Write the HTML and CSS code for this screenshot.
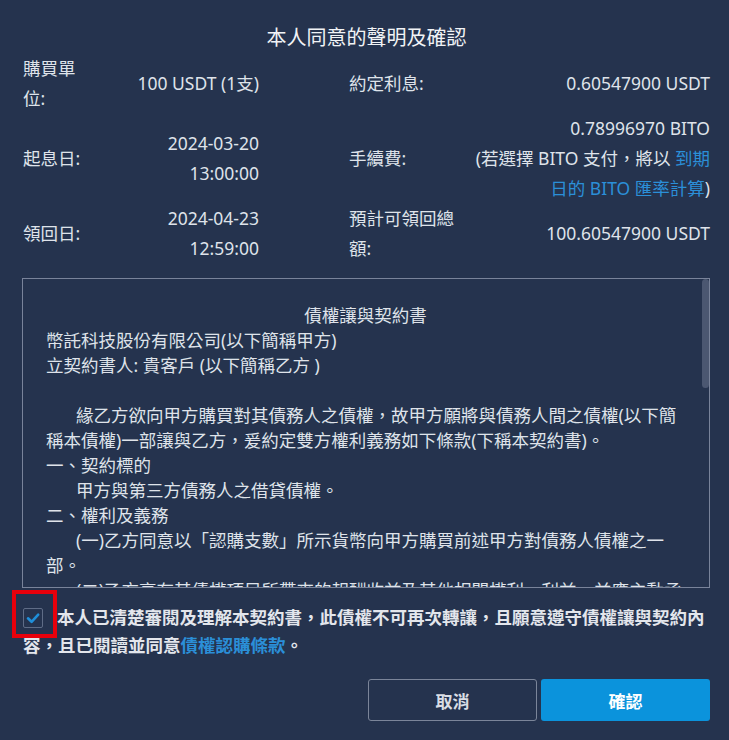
FILE: index.html
```html
<!DOCTYPE html>
<html lang="zh-Hant">
<head>
<meta charset="utf-8">
<title>本人同意的聲明及確認</title>
<link rel="stylesheet" href="styles.css">
</head>
<body>
<div class="dialog">
  <h1 class="title">本人同意的聲明及確認</h1>

  <div class="info">
    <div class="cell left">
      <div class="label l-left">購買單位:</div>
      <div class="value"><span class="v-left">100 USDT (1支)</span></div>
    </div>
    <div class="cell right">
      <div class="label l-right">約定利息:</div>
      <div class="value">0.60547900 USDT</div>
    </div>

    <div class="cell left">
      <div class="label l-left">起息日:</div>
      <div class="value"><span class="v-left">2024-03-20 13:00:00</span></div>
    </div>
    <div class="cell right">
      <div class="label l-right">手續費:</div>
      <div class="value">0.78996970 BITO<br>(若選擇 BITO 支付，將以 <span class="link">到期日的 BITO 匯率計算</span>)</div>
    </div>

    <div class="cell left">
      <div class="label l-left">領回日:</div>
      <div class="value"><span class="v-left">2024-04-23 12:59:00</span></div>
    </div>
    <div class="cell right">
      <div class="label l-right">預計可領回總額:</div>
      <div class="value">100.60547900 USDT</div>
    </div>
  </div>

  <div class="contract-frame">
    <div class="contract">
      <p class="c-title">債權讓與契約書</p>
      <p>幣託科技股份有限公司(以下簡稱甲方)</p>
      <p>立契約書人: 貴客戶 (以下簡稱乙方 )</p>
      <p class="blank">&nbsp;</p>
      <p class="ind">緣乙方欲向甲方購買對其債務人之債權，故甲方願將與債務人間之債權(以下簡稱本債權)一部讓與乙方，爰約定雙方權利義務如下條款(下稱本契約書)。</p>
      <p>一、契約標的</p>
      <p class="ind">甲方與第三方債務人之借貸債權。</p>
      <p>二、權利及義務</p>
      <p class="ind">(一)乙方同意以「認購支數」所示貨幣向甲方購買前述甲方對債務人債權之一部。</p>
      <p class="ind">(二)乙方享有其債權項目所帶來的報酬收益及其他相關權利、利益，並應主動承擔其債權項目可能產生之風險，包括但不限於債務人違約或延遲清償之風險。</p>
      <p class="ind">(三)甲方應於約定期間屆滿時，將乙方應得之本金及利息支付予乙方。</p>
      <p>三、債權讓與之通知</p>
      <p class="ind">甲方得以書面或電子方式通知債務人本債權已讓與乙方之事實。</p>
      <p>四、其他約定</p>
      <p class="ind">本契約未盡事宜，依中華民國相關法令及誠實信用原則處理。</p>
    </div>
    <div class="thumb"></div>
  </div>

  <p class="agree">
    <span class="check-wrap">
      <span class="checkbox">
        <svg viewBox="0 0 20 20" width="20" height="20" aria-hidden="true"><path d="M5 10.3 L8.6 13.8 L15.2 6.6" fill="none" stroke="#1f8fda" stroke-width="2.6" stroke-linecap="round" stroke-linejoin="round"/></svg>
      </span>
      <span class="highlight"></span>
    </span>本人已清楚審閱及理解本契約書，此債權不可再次轉讓，且願意遵守債權讓與契約內容，且已閱讀並同意<span class="link">債權認購條款</span>。
  </p>

  <div class="actions">
    <button class="btn btn-cancel" type="button">取消</button>
    <button class="btn btn-ok" type="button">確認</button>
  </div>
</div>
</body>
</html>
```

FILE: styles.css
```css
html, body {
  margin: 0;
  padding: 0;
  background: #25334e;
}

body {
  font-family: "Noto Sans", "Noto Sans CJK TC", sans-serif;
  color: #dfe3ea;
  font-size: 17.5px;
}

.dialog {
  width: 729px;
  height: 740px;
  box-sizing: border-box;
  padding: 23px 19px 0 23px;
}

.title {
  margin: 0;
  font-size: 20px;
  line-height: 30px;
  font-weight: 400;
  text-align: center;
  color: #f1f3f6;
}

.info {
  display: grid;
  grid-template-columns: 236px 1fr;
  column-gap: 90px;
  align-items: center;
  line-height: 30px;
}

.cell {
  display: flex;
  align-items: center;
}

.label {
  flex: none;
}

.l-left {
  width: 61px;
}

.l-right {
  width: 110px;
}

.value {
  flex: 1;
  text-align: right;
}

.v-left {
  display: inline-block;
  max-width: 140px;
  text-align: right;
}

.link {
  color: #2b8fd8;
}

.contract-frame {
  position: relative;
  margin: 15px 0 0 -1px;
  height: 310px;
  box-sizing: border-box;
  border: 1px solid #79839a;
}

.contract {
  height: 100%;
  box-sizing: border-box;
  padding: 24px 24px 0 23px;
  overflow: hidden;
  line-height: 25px;
}

.thumb {
  position: absolute;
  top: 0;
  right: 0;
  width: 7px;
  height: 109px;
  background: #4b5771;
  border-radius: 4px;
}

.contract p {
  margin: 0;
}

.contract .c-title {
  text-align: center;
}

.contract .ind {
  text-indent: 30px;
}

.agree {
  margin: 15px 0 0 0;
  line-height: 28px;
  font-weight: 700;
  color: #e3e6ec;
}

.check-wrap {
  position: relative;
  display: inline-block;
  width: 20px;
  height: 20px;
  margin-right: 14px;
  vertical-align: -4px;
}

.checkbox {
  display: block;
  width: 20px;
  height: 20px;
  box-sizing: border-box;
  border: 1px solid #5f6c86;
  border-radius: 2px;
}

.checkbox svg {
  display: block;
  margin: -1px;
}

.highlight {
  position: absolute;
  left: -11px;
  top: -18px;
  width: 45px;
  height: 48px;
  box-sizing: border-box;
  border: 4px solid #e8000b;
}

.actions {
  display: flex;
  justify-content: flex-end;
  gap: 4px;
  margin-top: 20px;
}

.btn {
  width: 169px;
  height: 42px;
  border-radius: 3px;
  font-family: "Noto Sans", "Noto Sans CJK TC", sans-serif;
  font-size: 17px;
  font-weight: 700;
  cursor: pointer;
}

.btn-cancel {
  background: transparent;
  border: 1px solid #7b8599;
  color: #d9dde4;
}

.btn-ok {
  background: #0b93dc;
  border: none;
  color: #ffffff;
}
```
